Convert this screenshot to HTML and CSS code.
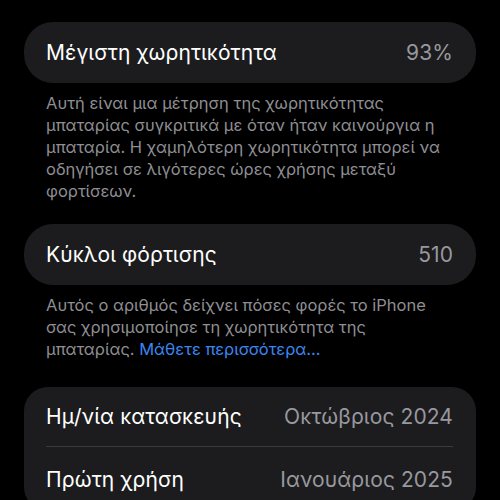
FILE: index.html
```html
<!DOCTYPE html>
<html lang="el">
<head>
    <meta charset="UTF-8">
    <meta name="viewport" content="width=device-width, initial-scale=1.0">
    <title>Υγεία μπαταρίας</title>
    <link rel="stylesheet" href="styles.css">
</head>
<body>

<div class="screen">
    <div class="card">
        <div class="row">
            <span class="label">Μέγιστη χωρητικότητα</span>
            <span class="value">93%</span>
        </div>
    </div>
    <p class="note">Αυτή είναι μια μέτρηση της χωρητικότητας μπαταρίας συγκριτικά με όταν ήταν καινούργια η μπαταρία. Η χαμηλότερη χωρητικότητα μπορεί να οδηγήσει σε λιγότερες ώρες χρήσης μεταξύ φορτίσεων.</p>

    <div class="card">
        <div class="row">
            <span class="label">Κύκλοι φόρτισης</span>
            <span class="value">510</span>
        </div>
    </div>
    <p class="note note-last">Αυτός ο αριθμός δείχνει πόσες φορές το iPhone σας χρησιμοποίησε τη χωρητικότητα της μπαταρίας. <a href="#" class="link">Μάθετε περισσότερα...</a></p>

    <div class="card card-list">
        <div class="row">
            <span class="label">Ημ/νία κατασκευής</span>
            <span class="value">Οκτώβριος 2024</span>
        </div>
        <div class="row">
            <span class="label">Πρώτη χρήση</span>
            <span class="value">Ιανουάριος 2025</span>
        </div>
    </div>
</div>

</body>
</html>
```

FILE: styles.css
```css
body {
    margin: 0;
    background-color: #000;
    font-family: Inter, "Noto Sans", sans-serif;
    color: #fff;
    overflow: hidden;
}

.screen {
    padding: 22px 24px 0 24px;
}

.card {
    background-color: #1c1c1e;
    border-radius: 29px;
}

.card-list {
    border-radius: 24px;
}

.row {
    display: flex;
    justify-content: space-between;
    align-items: center;
    height: 61px;
    margin: 0 23px 0 22px;
    font-size: 21px;
    letter-spacing: 0.1px;
}

.card-list .row {
    height: 59px;
}

.card-list .row + .row {
    border-top: 1px solid #3a3a3c;
    height: 64px;
}

.label {
    color: #fff;
}

.value {
    color: #98989e;
}

.note {
    margin: 0;
    padding: 9px 20px 22px 22px;
    font-size: 16.5px;
    line-height: 22px;
    color: #8e8e93;
}

.note-last {
    padding-top: 9px;
    padding-bottom: 27px;
}

.link {
    display: inline-block;
    color: #3a86f0;
    text-decoration: none;
}
```
